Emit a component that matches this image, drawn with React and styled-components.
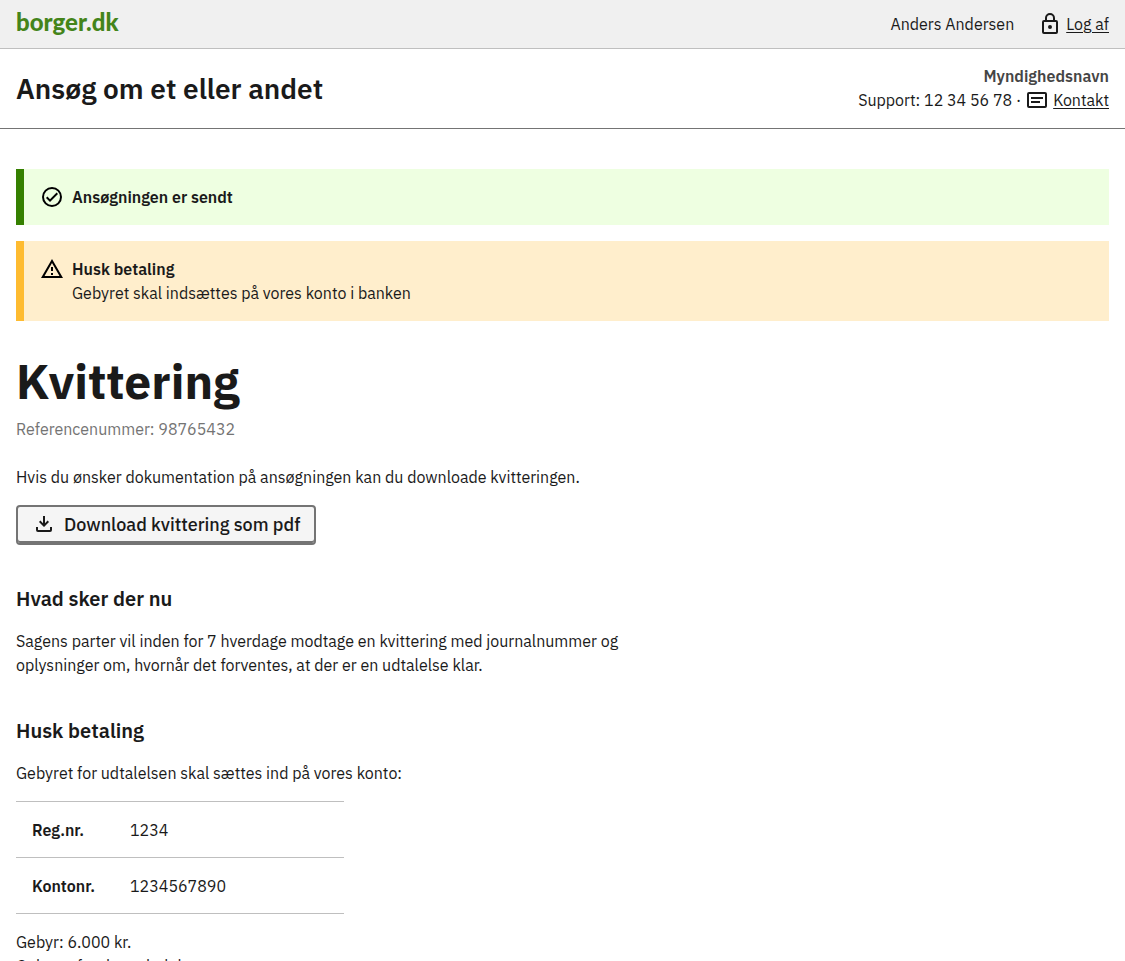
import React from "react";
import styled, { createGlobalStyle } from "styled-components";

const GlobalStyle = createGlobalStyle`
  *, *::before, *::after { box-sizing: border-box; }
  body {
    margin: 0;
    background: #fff;
    color: #1a1a1a;
    font: 400 16px/24px "IBM Plex Sans", Inter, "Noto Sans", sans-serif;
  }
  h1, h2, p { margin: 0; }
  a { color: inherit; text-underline-offset: 2px; }
`;

const TopBar = styled.div`
  display: flex;
  align-items: center;
  justify-content: space-between;
  padding: 12px 16px;
  background: #f0f0f0;
  border-bottom: 1px solid #bfbfbf;
`;

const Logo = styled.a`
  color: #44841a;
  font: 900 24px/20px Lato, sans-serif;
  padding-bottom: 4px;
  text-decoration: none;
`;

const UserMenu = styled.div`
  display: flex;
  gap: 24px;
`;

const IconLink = styled.span`
  display: inline-flex;
  align-items: center;
  gap: 4px;
`;

const Icon = styled.svg`
  flex: none;
  width: 24px;
  height: 24px;
  fill: ${(p) => p.$color || "#1a1a1a"};
`;

const SolutionHeader = styled.div`
  display: flex;
  align-items: flex-start;
  justify-content: space-between;
  padding: 15px 16px 16px;
  border-bottom: 1px solid #747474;
`;

const SolutionName = styled.div`
  padding-top: 9px;
  font-size: 28px;
  font-weight: 600;
  line-height: 32px;
`;

const Authority = styled.div`
  text-align: right;
`;

const AuthorityName = styled.div`
  color: #454545;
  font-weight: 600;
`;

const SupportLine = styled.div`
  display: flex;
  justify-content: flex-end;
  gap: 4px;
`;

const Main = styled.main`
  padding: 40px 16px 0;
`;

const Alert = styled.div`
  display: flex;
  gap: 8px;
  padding: 16px;
  margin-bottom: 16px;
  border-left: 8px solid ${(p) => (p.$type === "success" ? "#358000" : "#febb30")};
  background: ${(p) => (p.$type === "success" ? "#eeffe1" : "#ffeecc")};
`;

const AlertHeading = styled.p`
  font-weight: 600;
`;

const PageTitle = styled.h1`
  margin: 32px 0 8px;
  font-size: 48px;
  font-weight: 700;
  line-height: 56px;
`;

const Reference = styled.p`
  color: #747474;
`;

const Intro = styled.p`
  margin-top: 24px;
`;

const DownloadButton = styled.button`
  display: inline-flex;
  align-items: center;
  gap: 8px;
  height: 40px;
  margin-top: 16px;
  padding: 0 14px;
  border: 2px solid #747474;
  border-radius: 4px;
  box-shadow: inset 0 -2px 0 #747474;
  background: #f5f5f5;
  color: #1a1a1a;
  font: inherit;
  font-size: 18px;
  font-weight: 500;
`;

const Section = styled.section`
  max-width: 632px;
  margin-top: 40px;
`;

const SectionTitle = styled.h2`
  margin-bottom: 16px;
  font-size: 20px;
  font-weight: 600;
  line-height: 28px;
`;

const AccountTable = styled.table`
  width: 328px;
  margin: 16px 0;
  border-collapse: collapse;
  border-top: 1px solid #bfbfbf;

  th, td {
    height: 56px;
    padding: 0 16px;
    border-bottom: 1px solid #bfbfbf;
    text-align: left;
  }
  th {
    width: 98px;
    font-weight: 600;
  }
`;

export default function App() {
  return (
    <>
      <GlobalStyle />
      <header>
        <TopBar>
          <Logo href="#">borger.dk</Logo>
          <UserMenu>
            <span>Anders Andersen</span>
            <IconLink>
              <Icon viewBox="0 0 24 24" aria-hidden="true">
                <path d="M18 8h-1V6A5 5 0 0 0 7 6v2H6a2 2 0 0 0-2 2v10a2 2 0 0 0 2 2h12a2 2 0 0 0 2-2V10a2 2 0 0 0-2-2zM9 6a3 3 0 0 1 6 0v2H9zm9 14H6V10h12zm-6-3a2 2 0 1 0 0-4 2 2 0 0 0 0 4z" />
              </Icon>
              <a href="#">Log af</a>
            </IconLink>
          </UserMenu>
        </TopBar>
        <SolutionHeader>
          <SolutionName>Ansøg om et eller andet</SolutionName>
          <Authority>
            <AuthorityName>Myndighedsnavn</AuthorityName>
            <SupportLine>
              <span>Support: 12 34 56 78 ·</span>
              <IconLink>
                <Icon viewBox="0 0 24 24" aria-hidden="true">
                  <path d="M20 4H4a2 2 0 0 0-2 2v12a2 2 0 0 0 2 2h16a2 2 0 0 0 2-2V6a2 2 0 0 0-2-2zm0 14H4V6h16zM6 9h12v2H6zm0 4h9v2H6z" />
                </Icon>
                <a href="#">Kontakt</a>
              </IconLink>
            </SupportLine>
          </Authority>
        </SolutionHeader>
      </header>
      <Main>
        <Alert $type="success">
          <Icon viewBox="0 0 24 24" $color="#000" aria-hidden="true">
            <path d="M12 2a10 10 0 1 0 0 20 10 10 0 0 0 0-20zm0 18a8 8 0 1 1 0-16 8 8 0 0 1 0 16zm4.600-12.400L10 14.200l-2.600-2.600L6 13l4 4 8-8z" />
          </Icon>
          <AlertHeading>Ansøgningen er sendt</AlertHeading>
        </Alert>
        <Alert $type="warning">
          <Icon viewBox="0 0 24 24" $color="#000" aria-hidden="true">
            <path d="M12 6l7.500 13h-15zM12 2L1 21h22zm1 14h-2v2h2zm0-6h-2v4h2z" />
          </Icon>
          <div>
            <AlertHeading>Husk betaling</AlertHeading>
            <p>Gebyret skal indsættes på vores konto i banken</p>
          </div>
        </Alert>
        <PageTitle>Kvittering</PageTitle>
        <Reference>Referencenummer: 98765432</Reference>
        <Intro>Hvis du ønsker dokumentation på ansøgningen kan du downloade kvitteringen.</Intro>
        <DownloadButton type="button">
          <Icon viewBox="0 0 24 24" aria-hidden="true">
            <path d="M11 3h2v7.200l2.600-2.600L17 9l-5 5-5-5 1.400-1.400 2.600 2.600zM4 14h2v3h12v-3h2v3a2 2 0 0 1-2 2H6a2 2 0 0 1-2-2z" />
          </Icon>
          Download kvittering som pdf
        </DownloadButton>
        <Section>
          <SectionTitle>Hvad sker der nu</SectionTitle>
          <p>
            Sagens parter vil inden for 7 hverdage modtage en kvittering med journalnummer og
            oplysninger om, hvornår det forventes, at der er en udtalelse klar.
          </p>
        </Section>
        <Section>
          <SectionTitle>Husk betaling</SectionTitle>
          <p>Gebyret for udtalelsen skal sættes ind på vores konto:</p>
          <AccountTable>
            <tbody>
              <tr>
                <th scope="row">Reg.nr.</th>
                <td>1234</td>
              </tr>
              <tr>
                <th scope="row">Kontonr.</th>
                <td>1234567890</td>
              </tr>
            </tbody>
          </AccountTable>
          <p>Gebyr: 6.000 kr.</p>
          <p>Gebyret for den udtalelse</p>
        </Section>
      </Main>
    </>
  );
}
